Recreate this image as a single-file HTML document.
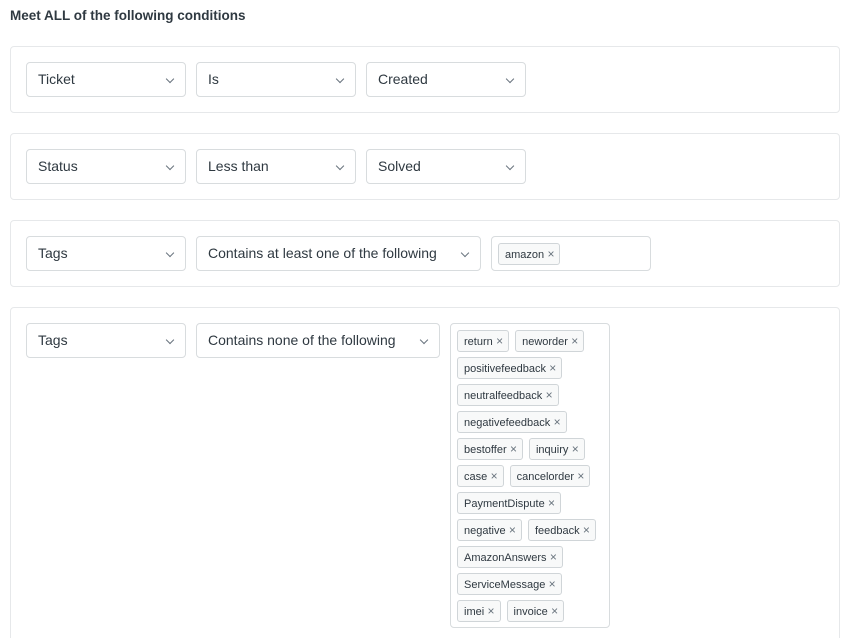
<!DOCTYPE html>
<html><head><style>
html,body{margin:0;background:#fff;font-family:"Liberation Sans",Arial,sans-serif;color:#2f3941;width:849px;height:638px;overflow:hidden;position:relative}
h1{position:absolute;left:10px;top:8px;margin:0;font-size:13.5px;font-weight:bold;color:#2f3941}
.panel{position:absolute;left:10px;width:828px;border:1px solid #e6e8ea;border-radius:4px;height:65px}
.sel{position:absolute;top:15px;height:35px;border:1px solid #d8dcde;border-radius:4px;box-sizing:border-box;font-size:14px;line-height:33px;padding-left:11px}
.sel:after{content:"";position:absolute;right:12px;top:13px;width:5px;height:5px;border-right:1.3px solid #68737d;border-bottom:1.3px solid #68737d;transform:rotate(45deg)}
.tb{position:absolute;border:1px solid #d8dcde;border-radius:4px;box-sizing:border-box;padding:6px 0 0 6px}
.row{display:flex;gap:6px;margin-bottom:5px}
.t{height:22px;box-sizing:border-box;border:1px solid #d0d5d8;border-radius:3px;background:#f8f9f9;font-size:11px;line-height:20px;padding:0 5px 0 6px;color:#2f3941;white-space:nowrap}
.t:after{content:" \00D7";color:#68737d;font-size:12px}
</style></head><body>
<h1>Meet ALL of the following conditions</h1>
<div class="panel" style="top:46px">
<div class="sel" style="left:15px;width:160px">Ticket</div>
<div class="sel" style="left:185px;width:160px">Is</div>
<div class="sel" style="left:355px;width:160px">Created</div>
</div>
<div class="panel" style="top:133px">
<div class="sel" style="left:15px;width:160px">Status</div>
<div class="sel" style="left:185px;width:160px">Less than</div>
<div class="sel" style="left:355px;width:160px">Solved</div>
</div>
<div class="panel" style="top:220px">
<div class="sel" style="left:15px;width:160px">Tags</div>
<div class="sel" style="left:185px;width:285px">Contains at least one of the following</div>
<div class="tb" style="left:480px;top:15px;width:160px;height:35px"><div class="row"><span class="t">amazon</span></div></div>
</div>
<div class="panel" style="top:307px;height:360px">
<div class="sel" style="left:15px;width:160px">Tags</div>
<div class="sel" style="left:185px;width:244px">Contains none of the following</div>
<div class="tb" style="left:439px;top:15px;width:160px;height:305px">
<div class="row"><span class="t">return</span><span class="t">neworder</span></div>
<div class="row"><span class="t">positivefeedback</span></div>
<div class="row"><span class="t">neutralfeedback</span></div>
<div class="row"><span class="t">negativefeedback</span></div>
<div class="row"><span class="t">bestoffer</span><span class="t">inquiry</span></div>
<div class="row"><span class="t">case</span><span class="t">cancelorder</span></div>
<div class="row"><span class="t">PaymentDispute</span></div>
<div class="row"><span class="t">negative</span><span class="t">feedback</span></div>
<div class="row"><span class="t">AmazonAnswers</span></div>
<div class="row"><span class="t">ServiceMessage</span></div>
<div class="row"><span class="t">imei</span><span class="t">invoice</span></div>
</div>
</div>
</body></html>
